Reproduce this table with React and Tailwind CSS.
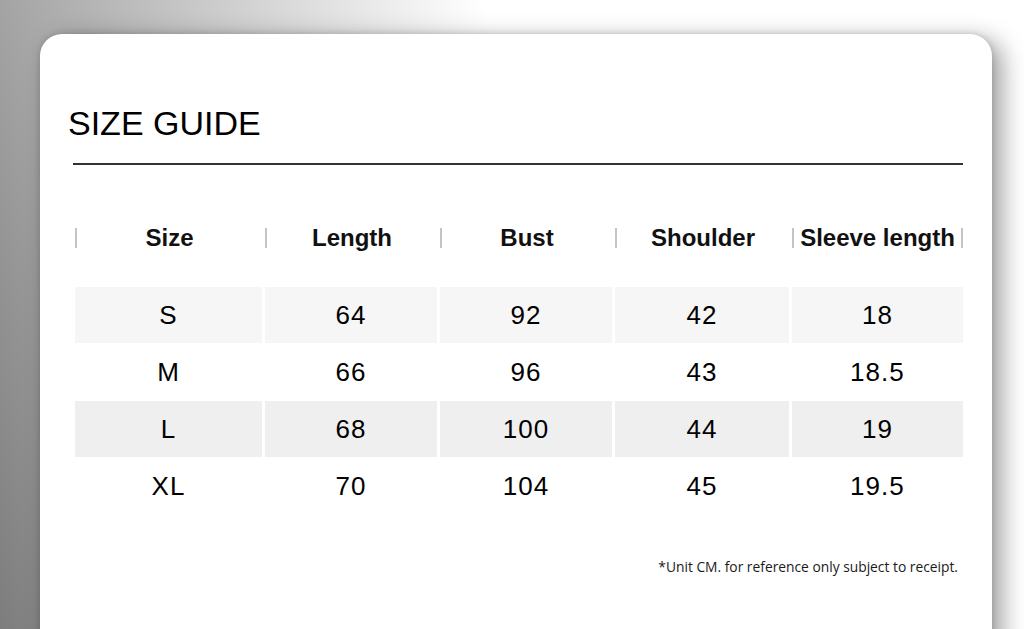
import React from "react";

const columns = ["Size", "Length", "Bust", "Shoulder", "Sleeve length"];

const rows = [
   { cells: ["S", "64", "92", "42", "18"], bg: "bg-[#f6f6f6]" },
   { cells: ["M", "66", "96", "43", "18.5"], bg: "bg-white" },
   { cells: ["L", "68", "100", "44", "19"], bg: "bg-[#efefef]" },
   { cells: ["XL", "70", "104", "45", "19.5"], bg: "bg-white" },
];

function Bar() {
   return <span className="w-[2px] h-[20px] bg-[#c4c4c4] shrink-0"></span>;
}

export default function App() {
   return (
      <div className="h-[629px] w-full overflow-hidden bg-[linear-gradient(72deg,#7d7d7d_0%,#ffffff_56%)] pt-[34px] pl-[40px]">
         <div className="w-[952px] h-[640px] bg-white rounded-[22px] shadow-[10px_6px_24px_rgba(0,0,0,0.38),0_0_6px_rgba(0,0,0,0.15)] pt-[72px] font-['Liberation_Sans',Arial,sans-serif] text-black">
            <h1 className="pl-[28px] text-[34px] leading-none font-normal">SIZE GUIDE</h1>
            <div className="mt-[23px] ml-[33px] mr-[29px] h-[2px] bg-[#333]"></div>

            <div className="ml-[35px] mr-[29px]">
               {/* header */}
               <div className="mt-[53px] h-[40px] grid grid-cols-[187px_172px_172px_174px_171px] gap-x-[3px]">
                  {columns.map((c, i) => (
                     <div key={c} className="flex items-center">
                        <Bar />
                        <span className="flex-1 text-center text-[24px] font-bold leading-none text-[#111]">{c}</span>
                        {i === columns.length - 1 && <Bar />}
                     </div>
                  ))}
               </div>

               {/* body */}
               <div className="mt-[29px] flex flex-col gap-y-[1px]">
                  {rows.map((r) => (
                     <div key={r.cells[0]} className="h-[56px] grid grid-cols-[187px_172px_172px_174px_171px] gap-x-[3px]">
                        {r.cells.map((v, i) => (
                           <div key={i} className={`${r.bg} flex items-center justify-center text-[26px] tracking-[0.04em]`}>
                              {v}
                           </div>
                        ))}
                     </div>
                  ))}
               </div>

               <p className="mt-[43px] pr-[5px] text-right text-[13.8px] leading-[20px] text-[#1a1a1a] font-['Open_Sans',sans-serif]">
                  *Unit CM. for reference only subject to receipt.
               </p>
            </div>
         </div>
      </div>
   );
}
